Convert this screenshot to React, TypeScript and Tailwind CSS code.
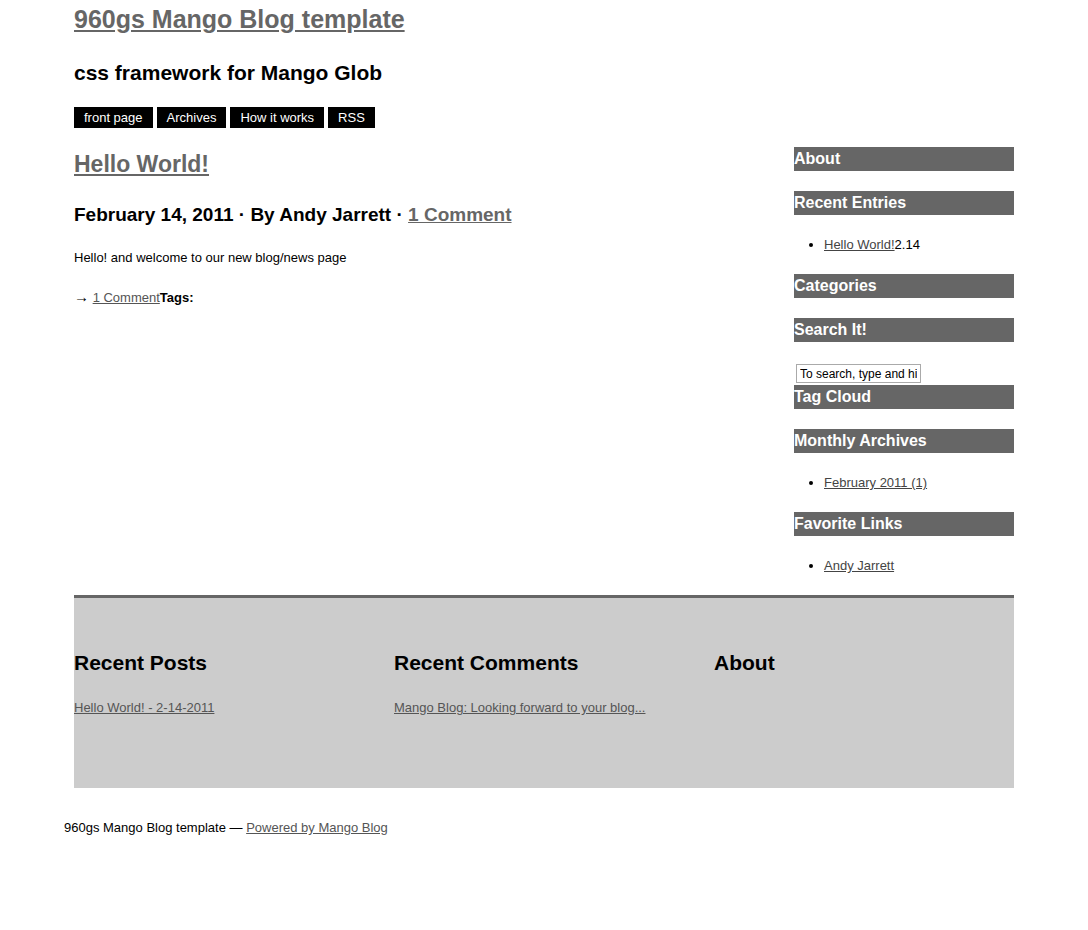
const sideLink = 'text-[#444] underline';

const SideHeading = ({ children }: { children: string }) => (
  <h3 className="bg-[#666] text-[16px] font-bold leading-[24px] text-white">{children}</h3>
);

const SideList = ({ children }: { children: React.ReactNode }) => (
  <ul className="my-[20px] list-disc pl-[30px] leading-[19px]">{children}</ul>
);

const navItems = ['front page', 'Archives', 'How it works', 'RSS'];

export default function App() {
  return (
    <div className="min-h-[930px] bg-white font-['Liberation_Sans',Arial,sans-serif] text-[13px] text-black">
      <div className="mx-auto w-[960px]">
        <header className="px-[10px] pt-[3px]">
          <h1 className="text-[25px] font-bold leading-[32px]">
            <a href="#" className="text-[#666] underline">
              960gs Mango Blog template
            </a>
          </h1>
          <h2 className="mt-[24px] text-[21px] font-bold leading-[28px]">css framework for Mango Glob</h2>
          <nav className="mt-[20px] flex gap-[4px]">
            {navItems.map((item) => (
              <a key={item} href="#" className="bg-black px-[10px] text-[13px] leading-[21px] text-white">
                {item}
              </a>
            ))}
          </nav>
        </header>

        <div className="mt-[19px] flex">
          <main className="mx-[10px] w-[700px]">
            <h2 className="mt-[3px] text-[23px] font-bold leading-[28px]">
              <a href="#" className="text-[#666] underline">
                Hello World!
              </a>
            </h2>
            <h3 className="mt-[25px] text-[19px] font-bold leading-[24px]">
              February 14, 2011 · By Andy Jarrett ·{' '}
              <a href="#" className="text-[#666] underline">
                1 Comment
              </a>
            </h3>
            <p className="mt-[22px] leading-[18px]">Hello! and welcome to our new blog/news page</p>
            <p className="mt-[21px] leading-[18px]">
              <span className="text-[15px]">→</span>{' '}
              <a href="#" className="text-[#555] underline">
                1 Comment
              </a>
              <strong>Tags:</strong>
            </p>
          </main>

          <aside className="mx-[10px] w-[220px]">
            <SideHeading>About</SideHeading>
            <div className="mt-[20px]">
              <SideHeading>Recent Entries</SideHeading>
            </div>
            <SideList>
              <li>
                <a href="#" className={sideLink}>
                  Hello World!
                </a>
                2.14
              </li>
            </SideList>
            <SideHeading>Categories</SideHeading>
            <div className="mt-[20px]">
              <SideHeading>Search It!</SideHeading>
            </div>
            <form className="mt-[20px]">
              <input
                type="text"
                readOnly
                value="To search, type and hit enter"
                className="m-[2px] h-[19px] w-[125px] border border-[#aaa] px-[3px] font-['Liberation_Sans',Arial,sans-serif] text-[12px] leading-[17px] text-black outline-none"
              />
            </form>
            <SideHeading>Tag Cloud</SideHeading>
            <div className="mt-[20px]">
              <SideHeading>Monthly Archives</SideHeading>
            </div>
            <SideList>
              <li>
                <a href="#" className={sideLink}>
                  February 2011 (1)
                </a>
              </li>
            </SideList>
            <SideHeading>Favorite Links</SideHeading>
            <SideList>
              <li>
                <a href="#" className={sideLink}>
                  Andy Jarrett
                </a>
              </li>
            </SideList>
          </aside>
        </div>

        <footer className="mx-[10px] h-[193px] border-t-[3px] border-[#666] bg-[#ccc]">
          <div className="flex gap-[20px] pt-[51px]">
            <section className="w-[300px]">
              <h2 className="text-[21px] font-bold leading-[28px]">Recent Posts</h2>
              <p className="mt-[22px] leading-[18px]">
                <a href="#" className="text-[#555] underline">
                  Hello World! - 2-14-2011
                </a>
              </p>
            </section>
            <section className="w-[300px]">
              <h2 className="text-[21px] font-bold leading-[28px]">Recent Comments</h2>
              <p className="mt-[22px] leading-[18px]">
                <a href="#" className="text-[#555] underline">
                  Mango Blog: Looking forward to your blog...
                </a>
              </p>
            </section>
            <section className="w-[300px]">
              <h2 className="text-[21px] font-bold leading-[28px]">About</h2>
            </section>
          </div>
        </footer>

        <p className="mt-[31px] leading-[18px]">
          960gs Mango Blog template —{' '}
          <a href="#" className="text-[#555] underline">
            Powered by Mango Blog
          </a>
        </p>
      </div>
    </div>
  );
}
